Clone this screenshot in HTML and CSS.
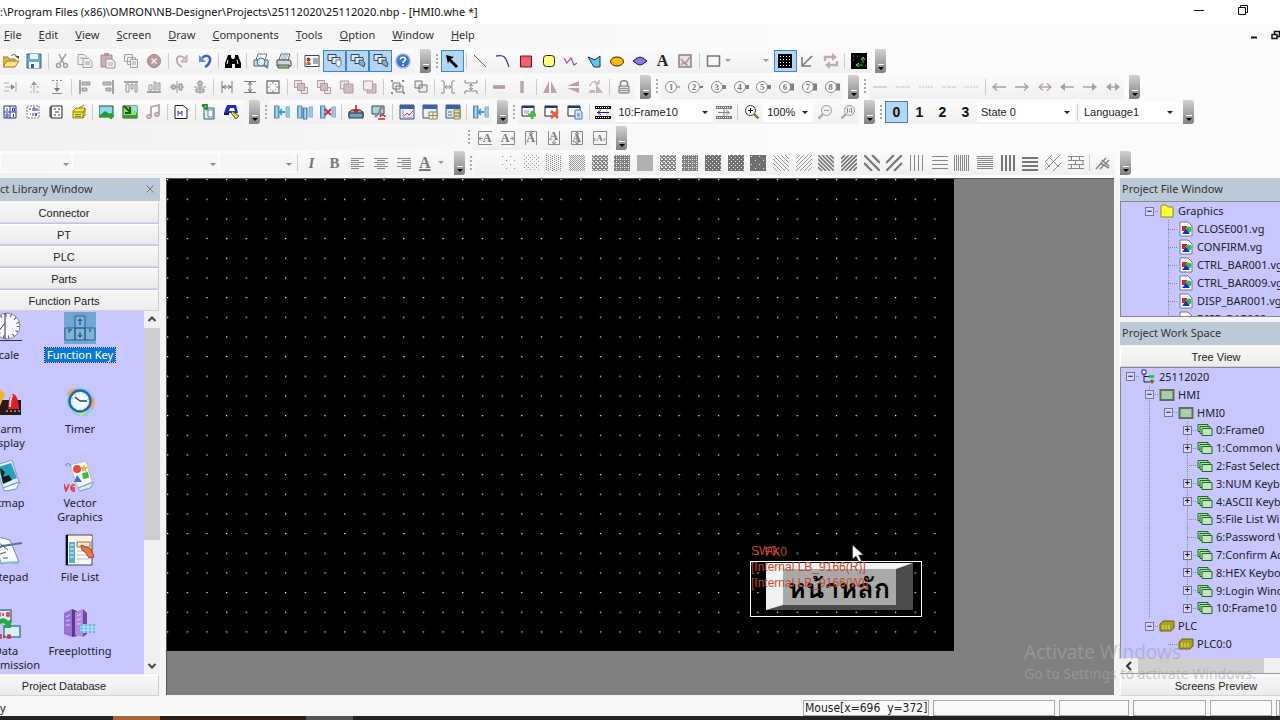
FILE: index.html
```html
<!DOCTYPE html>
<html lang="en">
<head>
<meta charset="utf-8">
<title>NB-Designer</title>
<link rel="stylesheet" href="styles.css">
</head>
<body>
<svg class="sprite" aria-hidden="true">
<defs>
<pattern id="p1" width="8" height="8" patternUnits="userSpaceOnUse"><path d="M1 1h1v1H1zM5 5h1v1H5z" fill="#888"/></pattern>
<pattern id="p2" width="4" height="4" patternUnits="userSpaceOnUse"><path d="M0 0h1v1H0zM2 2h1v1H2z" fill="#999"/></pattern>
<pattern id="p3" width="4" height="2" patternUnits="userSpaceOnUse"><path d="M0 0h1v1H0zM2 1h1v1H2z" fill="#888"/></pattern>
<pattern id="p4" width="2" height="2" patternUnits="userSpaceOnUse"><path d="M0 0h1v1H0zM1 1h1v1H1z" fill="#999"/></pattern>
<pattern id="p5" width="4" height="4" patternUnits="userSpaceOnUse"><path d="M0 0h4v4H0z" fill="#858585"/><path d="M1 0h1v1H1zM3 2h1v1H3zM0 2h1v1H0zM2 0h1v1H2zM1 3h1v1H1z" fill="#eee"/></pattern>
<pattern id="p6" width="4" height="4" patternUnits="userSpaceOnUse"><path d="M0 0h4v4H0z" fill="#808080"/><path d="M0 0h1v1H0zM2 2h1v1H2zM2 0h1v1H2z" fill="#eee"/></pattern>
<pattern id="p7" width="4" height="4" patternUnits="userSpaceOnUse"><path d="M0 0h4v4H0z" fill="#707070"/><path d="M1 0h1v1H1zM3 2h1v1H3z" fill="#eee"/></pattern>
<pattern id="p8" width="8" height="8" patternUnits="userSpaceOnUse"><path d="M0 0h8v8H0z" fill="#707070"/><path d="M1 1h1v1H1zM5 5h1v1H5z" fill="#eee"/></pattern>
<pattern id="dots" width="20" height="20" patternUnits="userSpaceOnUse"><path d="M0 0h1.300v1.300H0z" fill="#f4f4f4"/></pattern>
<linearGradient id="gb" x1="0" x2="1"><stop offset="0" stop-color="#2f7fb5"/><stop offset=".6" stop-color="#bfe8ff"/><stop offset="1" stop-color="#2f7fb5"/></linearGradient>
</defs>
<symbol id="open" viewBox="0 0 16 16"><path d="M0 14V4h5l1 2h6v2" fill="#e8b840" stroke="#a3791c"/><path d="M0 14l4-6h12l-4 6z" fill="#ffe08a" stroke="#a3791c"/><path d="M8 3c2-2 5-2 6 1" fill="none" stroke="#555"/><path d="M12 3h4v3z" fill="#444"/></symbol>
<symbol id="save" viewBox="0 0 16 16"><path d="M1 1h14v14H1z" fill="#6cabd8" stroke="#33698f"/><path d="M4 1h8v5H4z" fill="#eef6fb"/><path d="M3 9h10v6H3z" fill="#fff"/><path d="M5 11h3v4H5z" fill="#33698f"/></symbol>
<symbol id="cut" viewBox="0 0 16 16"><g fill="none" stroke="#a39a9c" stroke-width="1.4"><path d="M5 1l5 10M12 1L6 10"/><circle cx="4.500" cy="12.500" r="2"/><circle cx="11.500" cy="12.500" r="2"/></g></symbol>
<symbol id="copy" viewBox="0 0 16 16"><g fill="#f4f0f1" stroke="#a89ea0"><path d="M1 1.500h6l3 3v7H1z"/><path d="M6 5.500h6l3 3v6H6z"/><path d="M8 9h5M8 11h5M3 5h4"/></g></symbol>
<symbol id="paste" viewBox="0 0 16 16"><path d="M1 2h11v12H1z" fill="#c9b1b4" stroke="#a58e92"/><path d="M4 0h5v3H4z" fill="#a99"/><path d="M6 6h6l3 3v6H6z" fill="#f4eef0" stroke="#a58e92"/><path d="M8 10h5M8 12h5" stroke="#b9a4a8"/></symbol>
<symbol id="multi" viewBox="0 0 16 16"><g fill="#f4f0f1" stroke="#a89ea0"><path d="M1.500 1.500h8v7h-8zM4.500 4.500h8v7h-8z"/><path d="M7.500 6.500h7v8h-7z"/><path d="M9 9h4M9 11h4"/></g></symbol>
<symbol id="del" viewBox="0 0 16 16"><circle cx="8" cy="8" r="6.500" fill="#b99a9e" stroke="#a08287"/><path d="M5.500 5.500l5 5m0-5l-5 5" stroke="#f5e9eb" stroke-width="1.600"/></symbol>
<symbol id="redo" viewBox="0 0 16 16"><path d="M10 5C6 1 2 4 3 8c0 3 3 5 5 6" fill="none" stroke="#b5a5a8" stroke-width="1.600"/><path d="M13 2v7H7z" fill="#d5cacc" stroke="#b5a5a8"/></symbol>
<symbol id="undo" viewBox="0 0 16 16"><path d="M5 5c4-4 9-2 8 3-1 3-3 5-5 6" fill="none" stroke="#3a62b8" stroke-width="2.400"/><path d="M2 2v7h7z" fill="#5f8be0"/></symbol>
<symbol id="find" viewBox="0 0 16 16"><path d="M3 2h3v2l1 2h2l1-2V2h3l1 3 2 5v5h-6v-4H7v4H0v-5l2-5z" fill="#000"/><path d="M3 7l-1 4M12 7l1 4" stroke="#fff"/></symbol>
<symbol id="print" viewBox="0 0 16 16"><path d="M5 1h9l-2 6H3z" fill="#fff" stroke="#567"/><path d="M1 7h13l1 2v4H1z" fill="#cfd8d8" stroke="#445"/><path d="M2 12h11v3H2z" fill="#8cc070" stroke="#556"/><path d="M6 3h6M5 5h6" stroke="#89a"/></symbol>
<symbol id="preview" viewBox="0 0 16 16"><path d="M5 1h9l-2 6H3z" fill="#fff" stroke="#678"/><path d="M1 7h14v6H1z" fill="#d6dde6" stroke="#567"/><circle cx="8" cy="9" r="4" fill="#d9eefa" stroke="#4a7090"/><path d="M11 12l4 3" stroke="#6a7a90" stroke-width="2"/></symbol>
<symbol id="card" viewBox="0 0 16 16"><path d="M1 2.500h14v11H1z" fill="#fff" stroke="#445"/><circle cx="4.500" cy="6.500" r="2" fill="#a33"/><path d="M2 12c0-5 5-5 5 0z" fill="#b8792a"/><path d="M9 6h5M9 8h5M9 10h5" stroke="#557"/></symbol>
<symbol id="sel" viewBox="0 0 16 16"><g fill="#d8eaf8" stroke="#33475c"><path d="M1 1.500h8v6H1z"/><path d="M5 4.500h8v6H5z"/></g><path d="M9 7h5v5l-2 2-3-2z" fill="#fff" stroke="#678"/></symbol>
<symbol id="sel2" viewBox="0 0 16 16"><g fill="#d8eaf8" stroke="#33475c"><path d="M1 1.500h8v6H1z"/><path d="M5 4.500h8v6H5z"/></g><path d="M9 7h3l3 3-1 4-5-3z" fill="#8fa9c0" stroke="#456"/></symbol>
<symbol id="help" viewBox="0 0 16 16"><circle cx="8" cy="8" r="7" fill="#3c74cc" stroke="#9db9e6" stroke-width="1.500"/><path d="M5.500 6.500c0-3 5-3 5 0 0 1.500-2.500 1.500-2.500 3.500M8 11.500v1.500" fill="none" stroke="#fff" stroke-width="1.700"/></symbol>
<symbol id="arrow" viewBox="0 0 16 16"><path d="M2 2l8 2-3 2 7 7-2 2-7-7-1 3z" fill="#000"/></symbol>
<symbol id="line" viewBox="0 0 16 16"><path d="M2 2l12 12" stroke="#2e6b5c"/></symbol>
<symbol id="curve" viewBox="0 0 16 16"><path d="M1 3c9-2 10 2 13 11" fill="none" stroke="#4a3f9c" stroke-width="1.300"/></symbol>
<symbol id="rect" viewBox="0 0 16 16"><path d="M2.500 3h11v11h-11z" fill="#f0606c" stroke="#5c1a20"/></symbol>
<symbol id="rrect" viewBox="0 0 16 16"><rect x="2.500" y="2.500" width="11" height="11" rx="3" fill="#ffff7a" stroke="#222"/></symbol>
<symbol id="zig" viewBox="0 0 16 16"><path d="M1 5l3 5 4-5 3 7 3-2" fill="none" stroke="#a54a9d" stroke-width="1.200"/></symbol>
<symbol id="poly" viewBox="0 0 16 16"><path d="M2 4l7 3 5-4v11H8z" fill="#58c8f0" stroke="#234"/></symbol>
<symbol id="ell" viewBox="0 0 16 16"><ellipse cx="8" cy="8.500" rx="6.500" ry="4.500" fill="#ffb900" stroke="#222"/></symbol>
<symbol id="dia" viewBox="0 0 16 16"><path d="M1 8l4-3 3-1 3 1 4 3-4 3-3 1-3-1z" fill="#8878ee" stroke="#223"/></symbol>
<symbol id="pic" viewBox="0 0 16 16"><path d="M2 2h12v12H2z" fill="#eae2e3" stroke="#8a8082" stroke-width="1.500"/><path d="M4 6l4 5 5-7M4 12l3-3 4 4" fill="none" stroke="#b58f96" stroke-width="1.600"/></symbol>
<symbol id="hollow" viewBox="0 0 16 16"><path d="M1.500 3h12v10h-12z" fill="none" stroke="#777" stroke-width="1.500"/></symbol>
<symbol id="grid" viewBox="0 0 16 16"><path d="M1 1h14v14H1z" fill="#000"/><path d="M3 3.500h1M6 3.500h1M9 3.500h1M12 3.500h1M3 6.500h1M6 6.500h1M9 6.500h1M12 6.500h1M3 9.500h1M6 9.500h1M9 9.500h1M12 9.500h1M3 12.500h1M6 12.500h1M9 12.500h1M12 12.500h1" stroke="#fff"/></symbol>
<symbol id="darrow" viewBox="0 0 16 16"><path d="M12 3L3 12M2 4v9h9" fill="none" stroke="#777" stroke-width="1.500"/></symbol>
<symbol id="swap" viewBox="0 0 16 16"><path d="M2 8V4h8M14 8v4H6" fill="none" stroke="#c2abae" stroke-width="2.400"/><path d="M9 0l5 4-5 4zM7 8l-5 4 5 4z" fill="#c2abae"/></symbol>
<symbol id="green" viewBox="0 0 16 16"><path d="M0 0h16v16H0z" fill="#000"/><path d="M5 12h7M12 10V5" fill="none" stroke="#3c3"/><path d="M8 10l-3 2 3 2M10 7l2-3 2 3" fill="none" stroke="#3f3"/><path d="M2 3h1M6 3h1M2 7h1M14 13h1" stroke="#7a7"/></symbol>
<symbol id="ind" viewBox="0 0 16 16"><path d="M1 4h5M1 12h5M2 8h9M13 3v10" stroke="#aaa" fill="none"/><path d="M8 5l4 3-4 3z" fill="#8a8a8a"/></symbol>
<symbol id="indu" viewBox="0 0 16 16"><path d="M8 4v10M4 8h2M4 13h2M10 8h3M10 13h3" stroke="#aaa"/><path d="M5 6l3-4 3 4z" fill="#999"/></symbol>
<symbol id="indd" viewBox="0 0 16 16"><path d="M3 1.500h2M7 1.500h2M11 1.500h2M8 3v8M3 14.500h10" stroke="#8a8a8a"/><path d="M5 9l3 4 3-4z" fill="#777"/></symbol>
<symbol id="all" viewBox="0 0 16 16"><path d="M3 1v14" stroke="#888" stroke-width="1.500"/><path d="M5 3h8v3H5zM5 9h5v3H5z" fill="#c8b9bb" stroke="#999"/></symbol>
<symbol id="alr" viewBox="0 0 16 16"><path d="M13 1v14" stroke="#888" stroke-width="1.500"/><path d="M3 3h8v3H3zM6 9h5v3H6z" fill="#c8b9bb" stroke="#999"/></symbol>
<symbol id="alt" viewBox="0 0 16 16"><path d="M1 3h14" stroke="#888" stroke-width="1.500"/><path d="M3 5h3v8H3zM8 5h2v5H8zM12 5h2v8h-2z" fill="#eee" stroke="#999"/></symbol>
<symbol id="alb" viewBox="0 0 16 16"><path d="M1 13h14" stroke="#888" stroke-width="1.500"/><path d="M3 6h3v5H3zM8 3h2v8H8zM12 4h2v7h-2z" fill="#eee" stroke="#999"/></symbol>
<symbol id="alc" viewBox="0 0 16 16"><path d="M8 2v12M1 8h14" stroke="#999"/><path d="M3 6h3v4H3zM10 5h3v6h-3z" fill="#d8cccd" stroke="#888"/></symbol>
<symbol id="alm" viewBox="0 0 16 16"><path d="M8 1v14M2 8h12" stroke="#999"/><path d="M6 3h4v3H6zM4 10h8v3H4z" fill="#d8cccd" stroke="#888"/></symbol>
<symbol id="hh" viewBox="0 0 16 16"><path d="M3 2v12M13 2v12M3 8h10" stroke="#777"/><path d="M7 6L4 8l3 2M9 6l3 2-3 2" fill="none" stroke="#777"/></symbol>
<symbol id="vv" viewBox="0 0 16 16"><path d="M2 2.500h12M2 13.500h12M8 3v10M6 6l2-3 2 3M6 10l2 3 2-3" stroke="#777" fill="none"/></symbol>
<symbol id="bb" viewBox="0 0 16 16"><path d="M2 2h12v12H2z" fill="none" stroke="#777" stroke-width="1.300"/><path d="M8 1v4M8 11v4M1 8h4M11 8h4M5 5l1 1M11 5l-1 1M5 11l1-1M11 11l-1-1" stroke="#888"/></symbol>
<symbol id="ord" viewBox="0 0 16 16"><path d="M1.500 1.500h7v7h-7zM8.500 8.500h6v6h-6z" fill="#efe6e7" stroke="#b39a9e"/><path d="M4.500 4.500h7v7h-7z" fill="#d3bcc0" stroke="#b39a9e"/></symbol>
<symbol id="ord2" viewBox="0 0 16 16"><path d="M1.500 2h8v8h-8z" fill="#efe6e7" stroke="#b39a9e"/><path d="M5 5h9v9H5z" fill="#d3bcc0" stroke="#b39a9e"/></symbol>
<symbol id="ord3" viewBox="0 0 16 16"><path d="M5 5h9v9H5z" fill="#d3bcc0" stroke="#b39a9e"/><path d="M1.500 2h9v9h-9z" fill="#f3ecec" stroke="#b39a9e"/></symbol>
<symbol id="grp" viewBox="0 0 16 16"><path d="M3 4h7v6H3zM6 7h7v6H6z" fill="#eee" stroke="#777"/><path d="M1 2h2M12 2h2M1 14h2M13 14h2" stroke="#888" stroke-width="2"/></symbol>
<symbol id="ungrp" viewBox="0 0 16 16"><path d="M2 2h7v7H2zM6 6h8v7H6z" fill="#eee" stroke="#777"/></symbol>
<symbol id="sw" viewBox="0 0 16 16"><path d="M1 2h3v12H1M15 2h-3v12h3M5 8h6M7 6L5 8l2 2M9 6l2 2-2 2" fill="none" stroke="#888"/></symbol>
<symbol id="sh" viewBox="0 0 16 16"><path d="M2 1v3h12V1M2 15v-3h12v3M8 5v6M6 7l2-2 2 2M6 9l2 2 2-2" fill="none" stroke="#888"/></symbol>
<symbol id="mh" viewBox="0 0 16 16"><path d="M2 6h12v4H2z" fill="#c0acaf"/><path d="M2 8h12" stroke="#a08c90"/></symbol>
<symbol id="mv" viewBox="0 0 16 16"><path d="M6 2h4v12H6z" fill="#c8bcbe"/><path d="M8 2v12" stroke="#a09497"/></symbol>
<symbol id="fh" viewBox="0 0 16 16"><path d="M7 2v12H1zM9 2v12h6z" fill="#baa2a6"/></symbol>
<symbol id="fv" viewBox="0 0 16 16"><path d="M14 2v5H2zM14 14V9H2z" fill="#baa2a6"/></symbol>
<symbol id="rot" viewBox="0 0 16 16"><path d="M8 5l7 9H8zM2 11h5v3H1z" fill="#c5b3b6"/><path d="M2 7c1-5 6-5 8-3M7 5h4V1" fill="none" stroke="#999"/></symbol>
<symbol id="lock" viewBox="0 0 16 16"><path d="M4.500 7V4c0-3 7-3 7 0v3" fill="none" stroke="#888" stroke-width="1.500"/><path d="M3 7h10v7H3z" fill="#ddd" stroke="#777"/><path d="M3 9.500h10M3 11.500h10" stroke="#999"/></symbol>
<symbol id="w1" viewBox="0 0 16 16"><circle cx="7" cy="8" r="5.500" fill="#fff" stroke="#8a8a8a"/><path d="M13 8h3" stroke="#777"/></symbol>
<symbol id="w2" viewBox="0 0 16 16"><circle cx="7" cy="8" r="5.500" fill="#fff" stroke="#8a8a8a"/><path d="M13 8h3" stroke="#777" stroke-width="2"/></symbol>
<symbol id="w3" viewBox="0 0 16 16"><path d="M11 8h5" stroke="#808080" stroke-width="4"/><circle cx="7" cy="8" r="5.500" fill="#fff" stroke="#8a8a8a"/></symbol>
<symbol id="w4" viewBox="0 0 16 16"><path d="M10 8h6" stroke="#808080" stroke-width="7"/><circle cx="7" cy="8" r="5.500" fill="#fff" stroke="#8a8a8a"/></symbol>
<symbol id="l1" viewBox="0 0 16 16"><path d="M1 8h14" stroke="#b5b0b0"/></symbol>
<symbol id="l2" viewBox="0 0 16 16"><path d="M1 8h14" stroke="#c4c0c0" stroke-dasharray="4 1"/></symbol>
<symbol id="l3" viewBox="0 0 16 16"><path d="M1 8h14" stroke="#c4c0c0" stroke-dasharray="2 1"/></symbol>
<symbol id="ar" viewBox="0 0 16 16"><path d="M1 8h13M10 4.500L14 8l-4 3.500" fill="none" stroke="#aaa0a0" stroke-width="1.400"/></symbol>
<symbol id="al" viewBox="0 0 16 16"><path d="M2 8h13M6 4.500L2 8l4 3.500" fill="none" stroke="#aaa0a0" stroke-width="1.400"/></symbol>
<symbol id="ab" viewBox="0 0 16 16"><path d="M2 8h12M6 4.500L2 8l4 3.500M10 4.500L14 8l-4 3.500" fill="none" stroke="#b5a2a2" stroke-width="1.400"/></symbol>
<symbol id="arf" viewBox="0 0 16 16"><path d="M1 8h11" stroke="#aaa0a0" stroke-width="1.400"/><path d="M10 4l5 4-5 4z" fill="#aaa0a0"/></symbol>
<symbol id="alf" viewBox="0 0 16 16"><path d="M4 8h11" stroke="#aaa0a0" stroke-width="1.400"/><path d="M6 4L1 8l5 4z" fill="#aaa0a0"/></symbol>
<symbol id="abf" viewBox="0 0 16 16"><path d="M4 8h8" stroke="#aaa0a0" stroke-width="1.400"/><path d="M6 4L1 8l5 4zM10 4l5 4-5 4z" fill="#aaa0a0"/></symbol>
<symbol id="bits" viewBox="0 0 16 16"><path d="M2 2h12v12H2z" fill="#fff" stroke="#335"/><path d="M8 2v12M2 8h12M5 4v3M10.500 4h2v3h-2zM4 10h2v3H4zM11.500 10v3" fill="none" stroke="#33c"/></symbol>
<symbol id="alw" viewBox="0 0 16 16"><path d="M2 2h12v12H2z" fill="#fff" stroke="#778" stroke-dasharray="2 1"/><path d="M4 5h2M8 7V4h2v3M12 4v3M5 10h1M8 9v3M10 9l1 3 1-3" stroke="#33a" fill="none"/></symbol>
<symbol id="doc" viewBox="0 0 16 16"><path d="M3 2h11v12H3z" fill="#fff" stroke="#222"/><path d="M1 4h3M1 6h3M1 8h3M1 10h3M1 12h3M6 5h2M10 5h2M7 8h4M6 11h2M10 11h2" stroke="#333"/></symbol>
<symbol id="box" viewBox="0 0 16 16"><path d="M2 7l3-3h9v7l-2 3H2z" fill="#f1e34a" stroke="#8a8010"/><path d="M2 8h10v6M4 10.500h6M4 12.500h6M12 8l2-3M8 4l5-3" fill="none" stroke="#8a8010"/></symbol>
<symbol id="img1" viewBox="0 0 16 16"><path d="M0 2h14v11H0z" fill="#8fd8ef" stroke="#1d4b3c"/><path d="M0 12l6-5 8 5v1H0z" fill="#2a9a2a"/><path d="M12 9v6M9 12h6" stroke="#2a2" stroke-width="2.500"/></symbol>
<symbol id="img2" viewBox="0 0 16 16"><path d="M1 2h14v12H1z" fill="#8fe07a" stroke="#1d4b1c"/><path d="M8 2h7v7z" fill="#9ad9f2"/><path d="M2 2l6 6M8 3v6H3" stroke="#175c17" stroke-width="2" fill="none"/><path d="M1 11h14v3H1z" fill="#379c30"/></symbol>
<symbol id="note" viewBox="0 0 16 16"><path d="M6 12V3l8-2v9" fill="none" stroke="#b3a3a6" stroke-width="1.800"/><ellipse cx="4" cy="12.500" rx="2.500" ry="2" fill="#ccc0c2" stroke="#a99"/><ellipse cx="12" cy="10.500" rx="2.500" ry="2" fill="#ccc0c2" stroke="#a99"/></symbol>
<symbol id="mdoc" viewBox="0 0 16 16"><path d="M2 1.500h8l4 3v10H2z" fill="#fff" stroke="#222"/><path d="M5 12V7l2 3 2-3v5" fill="none" stroke="#33b"/></symbol>
<symbol id="idoc" viewBox="0 0 16 16"><path d="M3 4h10v11H3z" fill="#dff0f4" stroke="#456"/><path d="M1 1h5v5M6 6L1 1" stroke="#2a8a3a" stroke-width="1.800" fill="none"/><path d="M7 6h5v7H7z" fill="#fff" stroke="#5a8a9a"/></symbol>
<symbol id="tool" viewBox="0 0 16 16"><path d="M3 1h9l2 8H0z" fill="#1a2fb8"/><path d="M6 4h4l1 3H5z" fill="#fff"/><path d="M8 7l7 5-3 3-5-6z" fill="#e8d829" stroke="#554"/><path d="M0 10h5" stroke="#123" stroke-width="2"/></symbol>
<symbol id="pc1" viewBox="0 0 16 16"><path d="M0 2h5v12H0z" fill="url(#gb)" stroke="#68a"/><path d="M12 3h4v10h-4z" fill="#9bc9e6" stroke="#8ab"/><path d="M6 8h5M8 5L5.500 8 8 11" stroke="#3b9ae0" stroke-width="1.800" fill="none"/></symbol>
<symbol id="pc2" viewBox="0 0 16 16"><path d="M0 2h5v12H0z" fill="url(#gb)" stroke="#68a"/><path d="M6 4h4v11H6z" fill="url(#gb)" stroke="#579"/><path d="M12 3h4v10h-4z" fill="#9bc9e6" stroke="#8ab"/></symbol>
<symbol id="pc3" viewBox="0 0 16 16"><path d="M0 2h5v12H0z" fill="url(#gb)" stroke="#68a"/><path d="M12 3h4v10h-4z" fill="#9bc9e6" stroke="#8ab"/><path d="M5 5l6 6m0-6l-6 6" stroke="#c03030" stroke-width="1.800"/></symbol>
<symbol id="down" viewBox="0 0 16 16"><path d="M1 8l3-2h8l3 2v5H1z" fill="#7fb4cc" stroke="#234"/><path d="M1 9h14v5H1z" fill="#6aa4c0" stroke="#234"/><path d="M8 1v6M6 6l2 3 2-3z" stroke="#c22" fill="#c22" stroke-width="1.600"/></symbol>
<symbol id="wrench" viewBox="0 0 16 16"><path d="M1 2h12v8H1z" fill="#a8d8d8" stroke="#345"/><path d="M13 3c-3 0-5 3-4 5l-5 5" stroke="#889" stroke-width="2.400" fill="none"/><path d="M7 15h7M9 13c1-3 5-2 5 0" stroke="#c22" stroke-width="1.500" fill="none"/></symbol>
<symbol id="win1" viewBox="0 0 16 16"><path d="M1 1h14v14H1z" fill="#e8eefa" stroke="#456"/><path d="M1 1h14v4H1z" fill="#3b62a8"/><path d="M5 12l3-3 2 2 4-4" stroke="#c33" fill="none"/><path d="M4 6v8h11" stroke="#88c" fill="none"/></symbol>
<symbol id="win2" viewBox="0 0 16 16"><path d="M1 1h14v13H1z" fill="#e8eefa" stroke="#456"/><path d="M1 1h14v4H1z" fill="#3b62a8"/><path d="M7 8h8v7H7z" fill="#fff6b0" stroke="#887"/><path d="M7 11.500h8M11 8v7" stroke="#887"/></symbol>
<symbol id="win3" viewBox="0 0 16 16"><path d="M1 1h14v13H1z" fill="#dfe8f4" stroke="#456"/><path d="M1 1h14v4H1z" fill="#3b62a8"/><path d="M9 6h6v9H9z" fill="#f5ea70" stroke="#887"/><path d="M9 9h6M9 12h6M3 8h4M3 11h4" stroke="#668"/></symbol>
<symbol id="wadd" viewBox="0 0 16 16"><path d="M1 2h12v10H1z" fill="#fff" stroke="#222"/><path d="M1 2h12v2H1z" fill="#223a70"/><path d="M3 7h5M3 9h4" stroke="#889"/><path d="M11 7v8M7 11h8" stroke="#4b4" stroke-width="2.800"/></symbol>
<symbol id="wdel" viewBox="0 0 16 16"><path d="M1 2h12v10H1z" fill="#fff" stroke="#222"/><path d="M1 2h12v2H1z" fill="#223a70"/><path d="M7 7l7 7m0-7l-7 7" stroke="#e0603c" stroke-width="2.800"/></symbol>
<symbol id="wcopy" viewBox="0 0 16 16"><path d="M1 2h12v10H1z" fill="#fff" stroke="#222"/><path d="M1 2h12v2H1z" fill="#223a70"/><path d="M8 6h5l2 2v7H8z" fill="#d5e8f8" stroke="#47a"/><path d="M10 10h3M10 12h3" stroke="#47a"/></symbol>
<symbol id="film" viewBox="0 0 16 16"><path d="M0 2h16v3H0zM0 12h16v3H0z" fill="#111"/><path d="M1 3.500h14M1 13.500h14" stroke="#fff" stroke-dasharray="1 1"/><path d="M2 8.500h12M6 6L2.500 8.500 6 11" stroke="#22a" fill="none"/></symbol>
<symbol id="film2" viewBox="0 0 16 16"><path d="M0 2h16v3H0zM0 12h16v3H0z" fill="#777"/><path d="M1 3.500h14M1 13.500h14" stroke="#fff" stroke-dasharray="1 1"/><path d="M2 8.500h11M10 6l3.500 2.500L10 11M8 5v7" stroke="#888" fill="none"/></symbol>
<symbol id="zin" viewBox="0 0 16 16"><circle cx="6.500" cy="6.500" r="5" fill="#f4f8f8" stroke="#333"/><path d="M4 6.500h5M6.500 4v5" stroke="#222"/><path d="M10 10l4.500 4.500" stroke="#777040" stroke-width="2.400"/></symbol>
<symbol id="zout" viewBox="0 0 16 16"><circle cx="9.500" cy="6.500" r="5" fill="#f4f0f0" stroke="#999"/><path d="M7 6.500h5" stroke="#999"/><path d="M6 10l-4.500 4.500" stroke="#aaa" stroke-width="2.400"/></symbol>
<symbol id="z11" viewBox="0 0 16 16"><circle cx="9.500" cy="6.500" r="5" fill="#f4f0f0" stroke="#999"/><path d="M7.500 4v5M9.500 5v1M9.500 7v1M11.500 4v5" stroke="#888"/><path d="M6 10l-4.500 4.500" stroke="#aaa" stroke-width="2.400"/></symbol>
<symbol id="frA" viewBox="0 0 16 16"><path d="M1.500 1.500h13v13h-13z" fill="none" stroke="#8a8a8a"/></symbol>
<symbol id="frL" viewBox="0 0 16 16"><path d="M15 1.500H1.500v13H15M2 8.500h4M4 6.500l-2 2 2 2" fill="none" stroke="#8a8a8a"/></symbol>
<symbol id="frR" viewBox="0 0 16 16"><path d="M1 1.500h13.500v13H1M10 8.500h4M12 6.500l2 2-2 2" fill="none" stroke="#8a8a8a"/></symbol>
<symbol id="frT" viewBox="0 0 16 16"><path d="M2.500 15V1.500h11V15M8 2v4M6 4l2-2 2 2" fill="none" stroke="#8a8a8a"/></symbol>
<symbol id="frB" viewBox="0 0 16 16"><path d="M2.500 1v13.500h11V1M8 10v4M6 12l2 2 2-2" fill="none" stroke="#8a8a8a"/></symbol>
<symbol id="frM" viewBox="0 0 16 16"><path d="M2.500 1.500h11v13h-11zM8 2v12M6 4l2-2 2 2M6 12l2 2 2-2" fill="none" stroke="#8a8a8a"/></symbol>
<symbol id="tleft" viewBox="0 0 16 16"><path d="M1 3.500h13M1 5.500h8M1 7.500h13M1 9.500h8M1 11.500h13M1 13.500h8" stroke="#888"/></symbol>
<symbol id="tcen" viewBox="0 0 16 16"><path d="M1 3.500h14M4 5.500h8M1 7.500h14M4 9.500h8M1 11.500h14M4 13.500h8" stroke="#888"/></symbol>
<symbol id="tright" viewBox="0 0 16 16"><path d="M1 3.500h14M6 5.500h9M1 7.500h14M6 9.500h9M1 11.500h14M6 13.500h9" stroke="#888"/></symbol>
<symbol id="q1" viewBox="0 0 16 16"><path d="M0 0h16v16H0z" fill="url(#p1)"/></symbol>
<symbol id="q2" viewBox="0 0 16 16"><path d="M0 0h16v16H0z" fill="url(#p2)"/></symbol>
<symbol id="q3" viewBox="0 0 16 16"><path d="M0 0h16v16H0z" fill="url(#p3)"/></symbol>
<symbol id="q4" viewBox="0 0 16 16"><path d="M0 0h16v16H0z" fill="url(#p4)"/></symbol>
<symbol id="q5" viewBox="0 0 16 16"><path d="M0 0h16v16H0z" fill="url(#p5)"/></symbol>
<symbol id="q6" viewBox="0 0 16 16"><path d="M0 0h16v16H0z" fill="url(#p6)"/></symbol>
<symbol id="q7" viewBox="0 0 16 16"><path d="M0 0h16v16H0z" fill="url(#p7)"/></symbol>
<symbol id="q8" viewBox="0 0 16 16"><path d="M0 0h16v16H0z" fill="url(#p8)"/></symbol>
<symbol id="q9" viewBox="0 0 16 16"><path d="M0 0h16v16H0z" fill="#b0b0b0"/></symbol>
<symbol id="d1" viewBox="0 0 16 16"><path d="M0 12l4 4M0 8l8 8M0 4l12 12M0 0l16 16M4 0l12 12M8 0l8 8M12 0l4 4" stroke="#999"/></symbol>
<symbol id="d2" viewBox="0 0 16 16"><path d="M4 0L0 4M8 0L0 8M12 0L0 12M16 0L0 16M16 4L4 16M16 8l-8 8M16 12l-4 4" stroke="#999"/></symbol>
<symbol id="d3" viewBox="0 0 16 16"><path d="M0 12l4 4M0 8l8 8M0 4l12 12M0 0l16 16M4 0l12 12M8 0l8 8M12 0l4 4" stroke="#777" stroke-width="1.600"/></symbol>
<symbol id="d4" viewBox="0 0 16 16"><path d="M4 0L0 4M8 0L0 8M12 0L0 12M16 0L0 16M16 4L4 16M16 8l-8 8M16 12l-4 4" stroke="#707070" stroke-width="1.600"/></symbol>
<symbol id="d5" viewBox="0 0 16 16"><path d="M0 8l8 8M0 0l16 16M8 0l8 8" stroke="#777" stroke-width="2.200"/></symbol>
<symbol id="d6" viewBox="0 0 16 16"><path d="M8 0L0 8M16 0L0 16M16 8l-8 8" stroke="#777" stroke-width="2.200"/></symbol>
<symbol id="v1" viewBox="0 0 16 16"><path d="M1.500 0v16M5.500 0v16M9.500 0v16M13.500 0v16" stroke="#888"/></symbol>
<symbol id="h1" viewBox="0 0 16 16"><path d="M0 1.500h16M0 5.500h16M0 9.500h16M0 13.500h16" stroke="#888"/></symbol>
<symbol id="v2" viewBox="0 0 16 16"><path d="M.5 0v16M2.500 0v16M4.500 0v16M6.500 0v16M8.500 0v16M10.500 0v16M12.500 0v16M14.500 0v16" stroke="#888"/></symbol>
<symbol id="h2" viewBox="0 0 16 16"><path d="M0 1.500h16M0 3.500h16M0 5.500h16M0 7.500h16M0 9.500h16M0 11.500h16M0 13.500h16" stroke="#888"/></symbol>
<symbol id="v3" viewBox="0 0 16 16"><path d="M2 0v16M6 0v16M10 0v16M14 0v16" stroke="#777" stroke-width="2"/></symbol>
<symbol id="h3" viewBox="0 0 16 16"><path d="M0 3h16M0 7h16M0 11h16M0 15h16" stroke="#777" stroke-width="2"/></symbol>
<symbol id="br1" viewBox="0 0 16 16"><path d="M7 0L0 7M15 0L0 15M16 8l-8 8M5 3l5 5M1 8l4 4M10 8l4 4" stroke="#888"/></symbol>
<symbol id="br2" viewBox="0 0 16 16"><path d="M0 1.500h16M0 5.500h16M0 9.500h16M0 13.500h16M3.500 1v4M11.500 1v4M7.500 5v4M15 5v4M3.500 9v4M11.500 9v4" stroke="#888"/></symbol>
<symbol id="hash" viewBox="0 0 16 16"><path d="M1 14L11 3M5 14l9-9M5 8l9 5M7 5l7 6" stroke="#888" stroke-width="1.600"/></symbol>
<symbol id="folder" viewBox="0 0 16 16"><path d="M2 3l1-1h4l2 2h5v10H2z" fill="#ffff28" stroke="#8a8a30"/></symbol>
<symbol id="vg" viewBox="0 0 16 16"><path d="M2 1h8l4 4v10H2z" fill="#fff" stroke="#778"/><path d="M4 5h5v5H4z" fill="#e02020"/><circle cx="10.500" cy="8.500" r="3" fill="#28c050"/><path d="M8 8l4 5H4z" fill="#1030d0"/></symbol>
<symbol id="root" viewBox="0 0 16 16"><path d="M4 4v9h6M4 7.500h6" stroke="#222" fill="none"/><path d="M2 1h4v4H2z" fill="#fff" stroke="#22a"/><path d="M9 6h5v3H9z" fill="#2c3"/><path d="M12 10l2.500 2.500L12 15l-2.500-2.500z" fill="#863"/></symbol>
<symbol id="hmi" viewBox="0 0 16 16"><path d="M1.500 3h13v10h-13z" fill="#a8d0a8" stroke="#607060" stroke-width="2"/></symbol>
<symbol id="frm" viewBox="0 0 16 16"><g fill="#b8dcb8" stroke="#157015"><path d="M1 2.500h10v7H1z"/><path d="M3 4.500h10v7H3z"/><path d="M5 6.500h10v7H5z" fill="#c8e0c8"/></g></symbol>
<symbol id="plc" viewBox="0 0 16 16"><path d="M1 6l3-3h11v7l-3 3H1z" fill="#a8a020" stroke="#686408"/><path d="M4 7v4M7 7v4M10 7v4" stroke="#e8e870"/></symbol>
<symbol id="k-scale" viewBox="0 0 32 32"><circle cx="17" cy="14" r="13" fill="#f6f6ff" stroke="#889"/><circle cx="17" cy="14" r="11" fill="none" stroke="#556" stroke-width="3" stroke-dasharray="1 4"/><path d="M15 1v26M8 20l7-9M4 28.500h28" stroke="#334"/></symbol>
<symbol id="k-key" viewBox="0 0 32 32"><path d="M0 0h32v32H0z" fill="#6ea6d4"/><path d="M11 4h10v12H11zM1 16h10v12H1zM11 16h10v12H11zM21 16h10v12H21z" fill="#7fb4d6" stroke="#2c5d8c"/><path d="M16 8v5M16 20v5M5 17v4M7 17v2M26 17v3M14 9l2-2 2 2M14 23l2 2 2-2" stroke="#183a68" fill="none"/></symbol>
<symbol id="k-alarm" viewBox="0 0 32 32"><path d="M0 14h31v15H0z" fill="#251810"/><path d="M18 23c0-20 10-20 11 0z" fill="#e02028"/><path d="M22 9c-2 5-2 9-2 12" stroke="#ffd0d0" stroke-width="2" fill="none"/><path d="M8 1l7 7-5 12-5-6z" fill="#f2b420"/><path d="M16 25h14M4 27h8" stroke="#e8e0c0" stroke-dasharray="2 2"/><path d="M26 4l3-3M29 7h3" stroke="#e8d860"/></symbol>
<symbol id="k-timer" viewBox="0 0 32 32"><path d="M4 5l10-4 10 2 7 9-1 10-9 9-10-2-8-9z" fill="#8fcdf2"/><path d="M2 10l3-6 8-2 2 3zM26 8l5 6-2 9-5-1z" fill="#f0a860"/><path d="M5 23l13 7 5-5z" fill="#d0e870"/><circle cx="16" cy="15" r="10.500" fill="#f2faff" stroke="#246aa8" stroke-width="2.500"/><circle cx="16" cy="15" r="8" fill="none" stroke="#89a" stroke-dasharray="1 3"/><path d="M16 15l-5-4M16 15h7" stroke="#345" stroke-width="1.500"/></symbol>
<symbol id="k-bmp" viewBox="0 0 32 32"><path d="M6 5l16-5 7 22-16 6z" fill="#d8f2fa" stroke="#89a"/><path d="M8 7l13-4 6 15-14 5z" fill="#2aa0c0"/><path d="M10 8l5 4-2 5 6-2 3 5-9 4z" fill="#102018"/><path d="M13 28l17-6-4 7-11 2z" fill="#eef8ff" stroke="#79a"/><path d="M0 31v-7l4 3 4-3v7" fill="none" stroke="#e03030" stroke-width="2"/></symbol>
<symbol id="k-vec" viewBox="0 0 32 32"><path d="M6 5l16-4 6 21-14 6z" fill="#fafcff" stroke="#b5c4d4"/><path d="M2 6c0-4 5-3 5 1" fill="#9bd0ee" stroke="#68a"/><circle cx="13" cy="9" r="4" fill="#e84c28"/><path d="M20 4l1 3h3l-2 2 1 3-3-2-3 2 1-3-2-2h3z" fill="#f8b020"/><path d="M13 15l5 7h-8z" fill="#3878d0"/><path d="M18 13l6-1 1 6-6 1z" fill="#48b838"/><path d="M14 28l16-6-4 6-10 3z" fill="#e0f0fc" stroke="#7a9ab8"/><path d="M0 24l2 7 3-7M11 25c-5-1-5 6-1 6v-3H8" fill="none" stroke="#d84848" stroke-width="1.800"/></symbol>
<symbol id="k-note" viewBox="0 0 32 32"><path d="M4 2l16 4 9 22-18 2z" fill="#fafcff" stroke="#789"/><path d="M9 28l20-1v3H11z" fill="#88bcd8"/><path d="M32 9L12 12l-4 2" stroke="#58789a" stroke-width="2"/><path d="M8 8l10 8M10 20l6-2M13 24h5" stroke="#556"/></symbol>
<symbol id="k-file" viewBox="0 0 32 32"><path d="M2 1h26v30H2z" fill="#fafaf4" stroke="#445"/><path d="M3 2h25v4H3z" fill="#fff4d8"/><path d="M2 1h2v30H2z" fill="#111"/><path d="M5 8h6v21H5z" fill="#50b0d8"/><path d="M6 11h4M6 15h4M6 19h4M6 23h4" stroke="#e8f8ff"/><path d="M13 8h13v5H13z" fill="#ffe8c8" stroke="#a56a40"/><path d="M13 17h12M13 21h12M13 25h12" stroke="#bbc"/><path d="M17 11l10 4 3 8-5 1-3-5-4-3z" fill="#e87850" stroke="#9c4428"/></symbol>
<symbol id="k-data" viewBox="0 0 32 32"><path d="M4 2h17v12H4zM14 18h16v11H14z" fill="#d8eef8" stroke="#4a7a98" stroke-width="1.500"/><path d="M6 19c0-9 9-11 12-6l3-2v9h-8l3-3c-3-4-8-1-8 5z" fill="#28a848"/><path d="M4 5v3M8 5h2v3H8zM13 5v3M17 5h2v3h-2zM5 27v3M9 27h2v3H9zM14 27v3M18 27h2v3h-2z" fill="none" stroke="#d03030" stroke-width="1.500"/></symbol>
<symbol id="k-free" viewBox="0 0 32 32"><path d="M0 5l8-4v28l-8-3z" fill="#9a70d0"/><path d="M8 1l5 2v25l-5 1z" fill="#5c3890"/><path d="M11 4l8-3v28l-8-2z" fill="#b08ce0"/><path d="M19 1l4 4v21l-4 3z" fill="#6e48a4"/><path d="M2 9l4-2M2 13l4-1M2 17h4M13 8l4-2M13 12l4-1M13 16h4" stroke="#e0d0f8"/><path d="M16 16h15v9H16z" fill="#68b8e8"/><path d="M16 19h15M16 22h15M20 16v9M24 16v9M28 16v9" stroke="#c8ecfc"/></symbol>
</svg>

<div class="app">
<header class="head">
  <div class="title"><h1>:\Program Files (x86)\OMRON\NB-Designer\Projects\25112020\25112020.nbp - [HMI0.whe *]</h1>
    <span class="wb"><button aria-label="Minimize"><svg viewBox="0 0 12 12"><path d="M1 6.500h10" stroke="#111"/></svg></button><button aria-label="Restore"><svg viewBox="0 0 12 12"><path d="M1.500 3.500h7v7h-7zM3.500 3V1.500h7v7H9" fill="none" stroke="#111"/></svg></button></span></div>
  <div class="menurow"><nav class="menu"><button><u>F</u>ile</button><button><u>E</u>dit</button><button><u>V</u>iew</button><button><u>S</u>creen</button><button><u>D</u>raw</button><button><u>C</u>omponents</button><button><u>T</u>ools</button><button><u>O</u>ption</button><button><u>W</u>indow</button><button><u>H</u>elp</button></nav>
    <span class="wb mdi"><button aria-label="Minimize document"><svg viewBox="0 0 12 12"><path d="M3 8.500h6" stroke="#111" stroke-width="2"/></svg></button><button aria-label="Restore document"><svg viewBox="0 0 12 12"><path d="M2 5.500h5v4H2zM4.500 5V2.500h5v5H7" fill="none" stroke="#111" stroke-width="1.500"/></svg></button></span></div>

  <div class="row">
    <div class="bar w414"><button aria-label="Open"><svg><use href="#open"/></svg></button><button aria-label="Save"><svg><use href="#save"/></svg></button><i class="sep"></i><button aria-label="Cut"><svg><use href="#cut"/></svg></button><button aria-label="Copy"><svg><use href="#copy"/></svg></button><button aria-label="Paste"><svg><use href="#paste"/></svg></button><button aria-label="Multi copy"><svg><use href="#multi"/></svg></button><button aria-label="Delete"><svg><use href="#del"/></svg></button><i class="sep"></i><button aria-label="Redo"><svg><use href="#redo"/></svg></button><button aria-label="Undo"><svg><use href="#undo"/></svg></button><i class="sep"></i><button aria-label="Find"><svg><use href="#find"/></svg></button><i class="sep"></i><button aria-label="Preview"><svg><use href="#preview"/></svg></button><button aria-label="Print"><svg><use href="#print"/></svg></button><i class="sep"></i><button aria-label="Properties"><svg><use href="#card"/></svg></button><button class="on" aria-label="Library"><svg><use href="#sel"/></svg></button><button class="on" aria-label="Files"><svg><use href="#sel2"/></svg></button><button class="on" aria-label="Work space"><svg><use href="#sel2"/></svg></button><button aria-label="Help"><svg><use href="#help"/></svg></button></div><button class="more" aria-label="More"></button>
    <i class="grip"></i>
    <div class="bar w429"><button class="on" aria-label="Select"><svg><use href="#arrow"/></svg></button><i class="sep"></i><button aria-label="Line"><svg><use href="#line"/></svg></button><button aria-label="Arc"><svg><use href="#curve"/></svg></button><button aria-label="Rectangle"><svg><use href="#rect"/></svg></button><button aria-label="Round rectangle"><svg><use href="#rrect"/></svg></button><button aria-label="Polyline"><svg><use href="#zig"/></svg></button><button aria-label="Polygon"><svg><use href="#poly"/></svg></button><button aria-label="Ellipse"><svg><use href="#ell"/></svg></button><button aria-label="Diamond"><svg><use href="#dia"/></svg></button><button class="ser" aria-label="Text">A</button><button aria-label="Picture"><svg><use href="#pic"/></svg></button><i class="sep"></i><button class="dd w34" aria-label="Line colour"><svg><use href="#hollow"/></svg></button><button class="dd w38" aria-label="Fill colour"></button><button class="on" aria-label="Grid"><svg><use href="#grid"/></svg></button><button aria-label="Snap"><svg><use href="#darrow"/></svg></button><button aria-label="Swap"><svg><use href="#swap"/></svg></button><i class="sep"></i><button aria-label="Screen"><svg><use href="#green"/></svg></button></div><button class="more" aria-label="More"></button>
  </div>

  <div class="row">
    <div class="bar w635"><button aria-label="Move right"><svg><use href="#ind"/></svg></button><button aria-label="Move up"><svg><use href="#indu"/></svg></button><button aria-label="Move down"><svg><use href="#indd"/></svg></button><i class="sep"></i><button aria-label="Align left"><svg><use href="#all"/></svg></button><button aria-label="Align right"><svg><use href="#alr"/></svg></button><button aria-label="Align top"><svg><use href="#alt"/></svg></button><button aria-label="Align bottom"><svg><use href="#alb"/></svg></button><button aria-label="Centre across"><svg><use href="#alc"/></svg></button><button aria-label="Centre down"><svg><use href="#alm"/></svg></button><i class="sep"></i><button aria-label="Same width"><svg><use href="#hh"/></svg></button><button aria-label="Same height"><svg><use href="#vv"/></svg></button><button aria-label="Same size"><svg><use href="#bb"/></svg></button><i class="sep"></i><button aria-label="To top"><svg><use href="#ord"/></svg></button><button aria-label="To bottom"><svg><use href="#ord"/></svg></button><button aria-label="Forward"><svg><use href="#ord2"/></svg></button><button aria-label="Backward"><svg><use href="#ord3"/></svg></button><i class="sep"></i><button aria-label="Group"><svg><use href="#grp"/></svg></button><button aria-label="Ungroup"><svg><use href="#ungrp"/></svg></button><i class="sep"></i><button aria-label="Space across"><svg><use href="#sw"/></svg></button><button aria-label="Space down"><svg><use href="#sh"/></svg></button><i class="sep"></i><button aria-label="Middle row"><svg><use href="#mh"/></svg></button><button aria-label="Middle column"><svg><use href="#mv"/></svg></button><i class="sep"></i><button aria-label="Flip horizontal"><svg><use href="#fh"/></svg></button><button aria-label="Flip vertical"><svg><use href="#fv"/></svg></button><button aria-label="Rotate"><svg><use href="#rot"/></svg></button><i class="sep"></i><button aria-label="Lock"><svg><use href="#lock"/></svg></button></div><button class="more" aria-label="More"></button>
    <i class="grip"></i>
    <div class="bar w182 num"><button><svg><use href="#w1"/></svg><b>1</b></button><button><svg><use href="#w2"/></svg><b>2</b></button><button><svg><use href="#w3"/></svg><b>3</b></button><button><svg><use href="#w3"/></svg><b>4</b></button><button><svg><use href="#w3"/></svg><b>5</b></button><button><svg><use href="#w4"/></svg><b>6</b></button><button><svg><use href="#w4"/></svg><b>7</b></button><button><svg><use href="#w4"/></svg><b>8</b></button></div><button class="more" aria-label="More"></button>
    <i class="grip"></i>
    <div class="bar w255"><button aria-label="Solid"><svg><use href="#l1"/></svg></button><button aria-label="Dash"><svg><use href="#l2"/></svg></button><button aria-label="Dot"><svg><use href="#l3"/></svg></button><button aria-label="Dash dot"><svg><use href="#l2"/></svg></button><button aria-label="Dash dot dot"><svg><use href="#l3"/></svg></button><i class="sep"></i><button aria-label="Left arrow"><svg><use href="#al"/></svg></button><button aria-label="Right arrow"><svg><use href="#ar"/></svg></button><button aria-label="Both arrows"><svg><use href="#ab"/></svg></button><button aria-label="Left solid arrow"><svg><use href="#alf"/></svg></button><button aria-label="Right solid arrow"><svg><use href="#arf"/></svg></button><button aria-label="Both solid arrows"><svg><use href="#abf"/></svg></button></div><button class="more" aria-label="More"></button>
  </div>

  <div class="row">
    <div class="bar w244"><button aria-label="Bits"><svg><use href="#bits"/></svg></button><button aria-label="Alarm table"><svg><use href="#alw"/></svg></button><button aria-label="Event table"><svg><use href="#doc"/></svg></button><button aria-label="Recipe"><svg><use href="#box"/></svg></button><i class="sep"></i><button aria-label="Add picture"><svg><use href="#img1"/></svg></button><button aria-label="Import picture"><svg><use href="#img2"/></svg></button><button aria-label="Sound"><svg><use href="#note"/></svg></button><i class="sep"></i><button aria-label="Macro"><svg><use href="#mdoc"/></svg></button><i class="sep"></i><button aria-label="Import"><svg><use href="#idoc"/></svg></button><button aria-label="Compile"><svg><use href="#tool"/></svg></button></div><button class="more" aria-label="More"></button>
    <i class="grip"></i>
    <div class="bar w222"><button aria-label="Connect"><svg><use href="#pc1"/></svg></button><button aria-label="Link"><svg><use href="#pc2"/></svg></button><button aria-label="Disconnect"><svg><use href="#pc3"/></svg></button><i class="sep"></i><button aria-label="Download"><svg><use href="#down"/></svg></button><button aria-label="Maintenance"><svg><use href="#wrench"/></svg></button><i class="sep"></i><button aria-label="Trend"><svg><use href="#win1"/></svg></button><button aria-label="Offline test"><svg><use href="#win2"/></svg></button><button aria-label="Online test"><svg><use href="#win3"/></svg></button><i class="sep"></i><button aria-label="Transfer"><svg><use href="#pc1"/></svg></button></div><button class="more" aria-label="More"></button>
    <i class="grip"></i>
    <div class="bar w341"><button aria-label="Add frame"><svg><use href="#wadd"/></svg></button><button aria-label="Delete frame"><svg><use href="#wdel"/></svg></button><button aria-label="Copy frame"><svg><use href="#wcopy"/></svg></button><i class="sep"></i><button aria-label="Previous frame"><svg><use href="#film"/></svg></button><label class="combo w97"><select aria-label="Frame"><option>10:Frame10</option></select></label><button aria-label="Next frame"><svg><use href="#film2"/></svg></button><i class="sep"></i><button aria-label="Zoom in"><svg><use href="#zin"/></svg></button><label class="combo w50"><select aria-label="Zoom"><option>100%</option></select></label><button aria-label="Zoom out"><svg><use href="#zout"/></svg></button><button aria-label="Actual size"><svg><use href="#z11"/></svg></button></div><button class="more" aria-label="More"></button>
    <i class="grip"></i>
    <div class="bar w293 state"><button class="on">0</button><button>1</button><button>2</button><button>3</button><label class="combo w97"><select aria-label="State"><option>State 0</option></select></label><i class="sep"></i><label class="combo w97"><select aria-label="Language"><option>Language1</option></select></label></div><button class="more" aria-label="More"></button>
  </div>

  <div class="row in">
    <i class="grip"></i>
    <div class="bar w138 fit"><button aria-label="Text left"><svg><use href="#frL"/></svg><b class="e">A</b></button><button aria-label="Text right"><svg><use href="#frR"/></svg><b class="w">A</b></button><button aria-label="Text top"><svg><use href="#frT"/></svg><b>A</b></button><button aria-label="Text bottom"><svg><use href="#frB"/></svg><b class="up">A</b></button><button aria-label="Text middle"><svg><use href="#frM"/></svg><b>A</b></button><button aria-label="Text centre"><svg><use href="#frA"/></svg><b class="sm">‹A›</b></button></div><button class="more" aria-label="More"></button>
  </div>

  <div class="row">
    <div class="bar w449 faint"><label class="combo w72"><select aria-label="Font"><option></option></select></label><label class="combo grow"><select aria-label="Character set"><option></option></select></label><label class="combo w76"><select aria-label="Size"><option></option></select></label><i class="sep"></i><button class="ser g b23"><em>I</em></button><button class="ser g b23"><b>B</b></button><button class="b23" aria-label="Left"><svg><use href="#tleft"/></svg></button><button class="b23" aria-label="Centre"><svg><use href="#tcen"/></svg></button><button class="b23" aria-label="Right"><svg><use href="#tright"/></svg></button><button class="dd w34 ser g"><u>A</u></button></div><button class="more" aria-label="More"></button>
    <i class="grip"></i>
    <div class="bar w641"><button aria-label="No fill"></button><button aria-label="Pattern 1"><svg><use href="#q1"/></svg></button><button aria-label="Pattern 2"><svg><use href="#q2"/></svg></button><button aria-label="Pattern 3"><svg><use href="#q3"/></svg></button><button aria-label="Pattern 4"><svg><use href="#q4"/></svg></button><button aria-label="Pattern 5"><svg><use href="#q5"/></svg></button><button aria-label="Pattern 6"><svg><use href="#q6"/></svg></button><button aria-label="Pattern 7"><svg><use href="#q9"/></svg></button><button aria-label="Pattern 8"><svg><use href="#q5"/></svg></button><button aria-label="Pattern 9"><svg><use href="#q6"/></svg></button><button aria-label="Pattern 10"><svg><use href="#q7"/></svg></button><button aria-label="Pattern 11"><svg><use href="#q7"/></svg></button><button aria-label="Pattern 12"><svg><use href="#q8"/></svg></button><button aria-label="Pattern 13"><svg><use href="#d1"/></svg></button><button aria-label="Pattern 14"><svg><use href="#d2"/></svg></button><button aria-label="Pattern 15"><svg><use href="#d3"/></svg></button><button aria-label="Pattern 16"><svg><use href="#d4"/></svg></button><button aria-label="Pattern 17"><svg><use href="#d5"/></svg></button><button aria-label="Pattern 18"><svg><use href="#d6"/></svg></button><button aria-label="Pattern 19"><svg><use href="#v1"/></svg></button><button aria-label="Pattern 20"><svg><use href="#h1"/></svg></button><button aria-label="Pattern 21"><svg><use href="#v2"/></svg></button><button aria-label="Pattern 22"><svg><use href="#h2"/></svg></button><button aria-label="Pattern 23"><svg><use href="#v3"/></svg></button><button aria-label="Pattern 24"><svg><use href="#h3"/></svg></button><button aria-label="Pattern 25"><svg><use href="#br1"/></svg></button><button aria-label="Pattern 26"><svg><use href="#br2"/></svg></button><i class="sep"></i><button aria-label="Pattern colour"><svg><use href="#hash"/></svg></button></div><button class="more" aria-label="More"></button>
  </div>
</header>

<main class="work">
  <aside class="lib">
    <div class="cap"><h2>ct Library Window</h2><button aria-label="Close"><svg viewBox="0 0 10 10"><path d="M1.500 1.500l7 7m0-7l-7 7" stroke="#777"/></svg></button></div>
    <div class="cats"><button>Connector</button><button>PT</button><button>PLC</button><button>Parts</button><button>Function Parts</button></div>
    <div class="parts">
      <ul><li><svg><use href="#k-scale"/></svg><span>Scale</span></li><li class="sel"><svg><use href="#k-key"/></svg><span>Function Key</span></li><li><svg><use href="#k-alarm"/></svg><span>Alarm<br>Display</span></li><li><svg><use href="#k-timer"/></svg><span>Timer</span></li><li><svg><use href="#k-bmp"/></svg><span>Bitmap</span></li><li><svg><use href="#k-vec"/></svg><span>Vector Graphics</span></li><li><svg><use href="#k-note"/></svg><span>Notepad</span></li><li><svg><use href="#k-file"/></svg><span>File List</span></li><li><svg><use href="#k-data"/></svg><span>Data Transmission</span></li><li><svg><use href="#k-free"/></svg><span>Freeplotting</span></li></ul>
      <div class="vs"><svg viewBox="0 0 16 16"><path d="M4.500 9.500L8 6l3.500 3.500" fill="none" stroke="#444" stroke-width="2"/></svg><i></i><svg viewBox="0 0 16 16"><path d="M4.500 6.500L8 10l3.500-3.500" fill="none" stroke="#444" stroke-width="2"/></svg></div>
    </div>
    <div class="cats"><button>Project Database</button></div>
  </aside>

  <section class="stage">
    <div class="screen">
      <svg class="dots" viewBox="0 0 800 480" preserveAspectRatio="none"><path d="M0 0h800v480H0z" fill="url(#dots)"/></svg>
      <div class="part">
        <svg viewBox="0 0 170 54"><path d="M15 1h147v47H15z" fill="#4c4c4c"/><path d="M15 1h147l-17 6H32z" fill="#f2f2f2"/><path d="M15 1l17 6v36l-17 5z" fill="#f2f2f2"/><path d="M32 7h113v36H32z" fill="#a9a9a9"/></svg>
        <span class="th" lang="th">หน้าหลัก</span>
        <span class="addr a1">[Internal LB_9166(R)]</span><span class="addr a2">[Internal LB_9166(W)]</span>
        <span class="addr a0">SW0</span><span class="addr a00">FK0</span>
      </div>
      <svg class="cursor" viewBox="0 0 12 18"><path d="M.5 0v14l3.500-3 3 6 2.500-1-3-6h5z" fill="#fff" stroke="#333" stroke-width=".6"/></svg>
    </div>
  </section>

  <aside class="side">
    <div class="cap"><h2>Project File Window</h2></div>
    <ul class="tree files">
      <li><i></i><i class="h"><button>−</button></i><svg><use href="#folder"/></svg>Graphics</li>
      <li><i></i><i></i><i class="v h"></i><svg><use href="#vg"/></svg>CLOSE001.vg</li>
      <li><i></i><i></i><i class="v h"></i><svg><use href="#vg"/></svg>CONFIRM.vg</li>
      <li><i></i><i></i><i class="v h"></i><svg><use href="#vg"/></svg>CTRL_BAR001.vg</li>
      <li><i></i><i></i><i class="v h"></i><svg><use href="#vg"/></svg>CTRL_BAR009.vg</li>
      <li><i></i><i></i><i class="v h"></i><svg><use href="#vg"/></svg>DISP_BAR001.vg</li>
      <li><i></i><i></i><i class="v h"></i><svg><use href="#vg"/></svg>DISP_BAR002.vg</li>
    </ul>
    <div class="cap second"><h2>Project Work Space</h2></div>
    <div class="tab"><button>Tree View</button></div>
    <ul class="tree space">
      <li><i class="h"><button>−</button></i><svg><use href="#root"/></svg>25112020</li>
      <li><i></i><i class="v h"><button>−</button></i><svg><use href="#hmi"/></svg>HMI</li>
      <li><i></i><i class="v"></i><i class="h"><button>−</button></i><svg><use href="#hmi"/></svg>HMI0</li>
      <li><i></i><i class="v"></i><i></i><i class="v h"><button>+</button></i><svg><use href="#frm"/></svg>0:Frame0</li>
      <li><i></i><i class="v"></i><i></i><i class="v h"><button>+</button></i><svg><use href="#frm"/></svg>1:Common Window</li>
      <li><i></i><i class="v"></i><i></i><i class="v h"></i><svg><use href="#frm"/></svg>2:Fast Selection</li>
      <li><i></i><i class="v"></i><i></i><i class="v h"><button>+</button></i><svg><use href="#frm"/></svg>3:NUM Keyboard</li>
      <li><i></i><i class="v"></i><i></i><i class="v h"><button>+</button></i><svg><use href="#frm"/></svg>4:ASCII Keyboard</li>
      <li><i></i><i class="v"></i><i></i><i class="v h"></i><svg><use href="#frm"/></svg>5:File List Window</li>
      <li><i></i><i class="v"></i><i></i><i class="v h"></i><svg><use href="#frm"/></svg>6:Password Window</li>
      <li><i></i><i class="v"></i><i></i><i class="v h"><button>+</button></i><svg><use href="#frm"/></svg>7:Confirm Action</li>
      <li><i></i><i class="v"></i><i></i><i class="v h"><button>+</button></i><svg><use href="#frm"/></svg>8:HEX Keyboard</li>
      <li><i></i><i class="v"></i><i></i><i class="v h"><button>+</button></i><svg><use href="#frm"/></svg>9:Login Window</li>
      <li><i></i><i class="v"></i><i></i><i class="h"><button>+</button></i><svg><use href="#frm"/></svg>10:Frame10</li>
      <li><i></i><i class="h"><button>−</button></i><svg><use href="#plc"/></svg>PLC</li>
      <li><i></i><i></i><i class="h"></i><svg><use href="#plc"/></svg>PLC0:0</li>
    </ul>
    <div class="hs"><svg viewBox="0 0 16 16"><path d="M10 4L6 8l4 4" fill="none" stroke="#333" stroke-width="2"/></svg><i></i></div>
    <div class="tab"><button>Screens Preview</button></div>
  </aside>
</main>

<footer class="status"><span class="ready">y</span><span class="cell s1">Mouse[x=696&nbsp; y=372]</span><span class="cell s2"></span><span class="cell s3"></span><span class="cell s4"></span><span class="cell s5"></span><span class="cell s6"></span></footer>
<div class="task"><i class="t1"></i><i class="t2"></i><i class="t3"></i><i class="t4"></i></div>
<div class="mark"><p>Activate Windows</p><small>Go to Settings to activate Windows.</small></div>
</div>
</body>
</html>
```
FILE: styles.css
```css
* { box-sizing: border-box; }
body { margin: 0; background: #f4f4f4; color: #222; font: 11px/16px "Noto Sans", "Open Sans", sans-serif; }
button, select { font: inherit; color: inherit; border: 0; background: none; padding: 0; margin: 0; }
h1, h2, p, ul { margin: 0; padding: 0; font-size: inherit; font-weight: 400; list-style: none; }
i { font-style: normal; }
svg { display: block; flex: none; }
.sprite { position: absolute; width: 0; height: 0; }
.app { position: relative; display: flex; flex-direction: column; height: 100vh; overflow: hidden; }

.head { padding-bottom: 2px; background: linear-gradient(90deg, #f1f1f1, #fbfbfb 60%, #fcfcfd); }
.title, .menurow { display: flex; align-items: center; justify-content: space-between; height: 24px; white-space: nowrap; }
.title { background: #fff; }
.title h1 { color: #111; }
.wb { display: flex; gap: 32px; padding-right: 31px; }
.wb svg { width: 12px; height: 12px; }
.title .wb { padding-bottom: 4px; }
.mdi { gap: 10px; padding-right: 0; margin-right: -2px; }
.menu { display: flex; gap: 17px; padding-left: 4px; color: #333; }
.menurow { padding-bottom: 2px; }

.row { display: flex; align-items: center; height: 26px; }
.row:nth-child(4), .row:nth-child(6) { height: 25px; }
.row.in { padding-left: 463px; }
.bar { display: flex; align-items: center; height: 24px; flex: none; background: linear-gradient(#fbfbfb, #f0f0f0); }
.bar > button { flex: 1 1 0; min-width: 0; height: 22px; display: flex; align-items: center; justify-content: center; position: relative; }
.bar svg { width: 16px; height: 16px; }
.bar .on { background: #b5d5f0; box-shadow: inset 0 0 0 1px #3b86c6; }
.sep { flex: 0 0 5px; height: 16px; background: linear-gradient(#ccc, #ccc) 2px 0 / 1px 100% no-repeat; }
.more { position: relative; flex: none; width: 11px; height: 24px; margin-left: 5px; border-radius: 0 3px 3px 0; background: linear-gradient(#d2d2d2, #808080); }
.more::before { content: ""; position: absolute; left: 3px; top: 15px; width: 6px; height: 1px; background: #fff; }
.more::after { content: ""; position: absolute; left: 3px; top: 18px; border: 3px solid transparent; border-top-color: #000; border-bottom: 0; }
.grip { flex: none; width: 3px; height: 15px; margin: 0 2px 0 5px; background: repeating-linear-gradient(#aaa 0 2px, transparent 2px 4px) 0 0 / 2px 100% no-repeat; }
.w414 { width: 415px; }
.w429 { width: 429px; }
.w635 { width: 635px; }
.w182 { width: 182px; }
.w255 { width: 255px; }
.w244 { width: 246px; margin-left: -2px; }
.w222 { width: 222px; }
.w341 { width: 341px; }
.w293 { width: 293px; }
.w138 { width: 138px; }
.w449 { width: 449px; }
.w641 { width: 640px; }
.bar > .w34 { flex: 0 0 34px; }
.bar > .w38 { flex: 0 0 38px; }
.bar > .b23 { flex: 0 0 23px; }
.ser { font: 700 16px/20px "Liberation Serif", serif; }
.g { color: #777; }
.ser em, .ser b { font-size: 15px; }
.bar > .dd { justify-content: flex-start; padding-left: 4px; }
.dd::after, .combo::after { content: ""; position: absolute; right: 5px; top: 9px; border: 3px solid transparent; border-top-color: #999; border-bottom: 0; }
.num b { position: absolute; left: 8px; top: 5px; font: 700 9px/12px "Liberation Serif", serif; color: #777; }
.fit b { position: absolute; font: 700 12px/14px "Liberation Serif", serif; color: #777; }
.fit .e { padding-left: 5px; }
.fit .w { padding-right: 5px; }
.fit .up { padding-bottom: 4px; }
.fit .sm { font-size: 9px; }
.state button { font: 700 14px/20px "Liberation Sans", sans-serif; color: #111; }
.combo { position: relative; flex: none; height: 20px; background: #fff; }
.combo::after { border-top-color: #222; }
.combo select { appearance: none; width: 100%; height: 20px; padding-left: 4px; font: 11px/20px "Liberation Sans", sans-serif; color: #222; }
.w97 { width: 98px; }
.w50 { width: 50px; }
.w72 { width: 72px; }
.w76 { width: 76px; }
.grow { flex: 1; }
.faint .combo { background: #f6f6f6; border: 1px solid #fdfdfd; }
.faint .combo::after { right: 2px; border-top-color: #888; }
.faint u { text-decoration-thickness: 2px; }

.work { flex: 1; min-height: 0; display: flex; gap: 6px; }
.lib { flex: 0 0 160px; display: flex; flex-direction: column; overflow: hidden; margin-bottom: -1px; }
.cap { flex: none; display: flex; align-items: center; justify-content: space-between; height: 23px; padding: 0 5px 2px 2px; background: #bccad8; white-space: nowrap; color: #333; }
.lib .cap { padding-left: 0; }
.cap svg { width: 10px; height: 10px; }
.cats { display: flex; flex-direction: column; margin: 1px 1px 0 -31px; gap: 1px; background: #c4c0fb; }
.cats button, .tab button { height: 21px; background: linear-gradient(#f7f7f7, #ececec); border: 1px solid; border-color: #fff #ccc #d4d4d4 #fff; font: 11px/18px "Liberation Sans", sans-serif; color: #222; }
.parts { flex: 1; min-height: 0; display: flex; justify-content: space-between; background: #c8c6ff; overflow: hidden; }
.parts ul { flex: none; width: 148px; margin-left: -31px; display: grid; grid-template-columns: 74px 74px; grid-auto-rows: 74px; }
.parts li { display: flex; flex-direction: column; align-items: center; padding-top: 1px; gap: 4px; text-align: center; line-height: 14px; }
.parts li svg { width: 32px; height: 32px; }
.parts .sel span { background: #0a78d4; color: #fff; outline: 1px dotted #234; white-space: nowrap; padding: 0 2px; }
.vs { flex: none; width: 16px; display: flex; flex-direction: column; background: #f0f0f0; }
.vs svg { width: 16px; height: 17px; }
.vs i { flex: 0 1 212px; background: #cdcdcd; }
.vs svg:last-child { margin-top: auto; }

.stage { flex: 1; min-width: 0; background: #808080; border-left: 1px solid #555; border-top: 1px solid #555; }
.screen { position: relative; width: 787px; height: 472px; background: #000; overflow: hidden; }
.dots { width: 100%; height: 100%; }
.part { position: absolute; left: 583px; top: 382px; width: 172px; height: 56px; border: 1px solid #fff; }
.part > svg { width: 170px; height: 54px; }
.th { position: absolute; left: 37px; top: 9px; font: 700 27px/36px Loma, Garuda, Waree, "Noto Sans Thai", "Noto Sans", sans-serif; color: #000; white-space: nowrap; }
.addr { position: absolute; left: 0; font: 12px/14px "Liberation Sans", sans-serif; color: #c4482c; white-space: nowrap; }
.a1 { top: -2px; }
.a2 { top: 14px; }
.a0 { top: -18px; }
.a00 { top: -17px; left: 14px; }
.cursor { position: absolute; left: 685px; top: 366px; width: 12px; height: 18px; }

.side { flex: 0 0 160px; display: flex; flex-direction: column; overflow: hidden; margin-bottom: -1px; }
.tree { flex: none; display: flex; flex-direction: column; background: #c8c6ff; border-top: 1px solid #888; border-left: 1px solid #888; overflow: hidden; white-space: nowrap; }
.files { height: 116px; border-bottom: 1px solid #888; }
.files li { flex: 0 0 18px; }
.space { flex: 1 1 0; min-height: 0; padding-bottom: 5px; }
.space li { flex: 1 1 0; min-height: 0; }
.tree li { display: flex; align-items: center; }
.tree li > i { flex: 0 0 19px; align-self: stretch; display: flex; align-items: center; justify-content: center; --dv: repeating-linear-gradient(#889 0 1px, transparent 1px 2px) 9px 0 / 1px 100% no-repeat; --dh: repeating-linear-gradient(90deg, #889 0 1px, transparent 1px 2px) 9px 50% / 10px 1px no-repeat; }
.tree .v { background: var(--dv); }
.tree .h { background: var(--dh); }
.tree .v.h { background: var(--dv), var(--dh); }
.tree li > svg { width: 16px; height: 16px; margin-right: 3px; }
.tree button { width: 9px; height: 9px; border: 1px solid #778; background: #d8d6ff; font: 700 9px/7px "Liberation Sans", sans-serif; color: #113; display: flex; align-items: center; justify-content: center; }
.second { margin-top: 5px; }
.tab { flex: none; display: flex; margin: 1px -32px 0 0; }
.tab button { flex: 1; }
.hs { flex: none; display: flex; height: 16px; background: #f0f0f0; border-bottom: 1px solid #99a; }
.hs svg { width: 18px; height: 16px; }
.hs i { width: 126px; background: #cdcdcd; }

.status { flex: none; display: flex; align-items: center; gap: 4px; height: 20px; margin-top: 1px; padding-top: 3px; background: #f7f7f7; overflow: hidden; }
.ready { flex: 1; }
.cell { flex: none; height: 16px; border: 1px solid #aaa; background: #fafafa; font: 12px/14px "DejaVu Sans Condensed", "DejaVu Sans", sans-serif; color: #222; white-space: nowrap; padding-left: 1px; }
.s1 { width: 126px; }
.s2 { width: 122px; }
.s3 { width: 70px; }
.s4 { width: 73px; }
.s5 { width: 62px; }
.s6 { width: 4px; }
.task { flex: none; display: flex; height: 4px; background: #222; }
.t1 { width: 113px; background: #1f2326; }
.t2 { width: 47px; background: #a5653a; }
.t3 { width: 146px; background: #2b1c18; }
.t4 { width: 47px; background: #555; }
.mark { position: absolute; right: 26px; bottom: 36px; width: 230px; color: rgba(165, 165, 170, .6); white-space: nowrap; pointer-events: none; }
.mark p { font-size: 19px; line-height: 24px; }
.mark small { display: block; font-size: 14px; line-height: 20px; }
```
